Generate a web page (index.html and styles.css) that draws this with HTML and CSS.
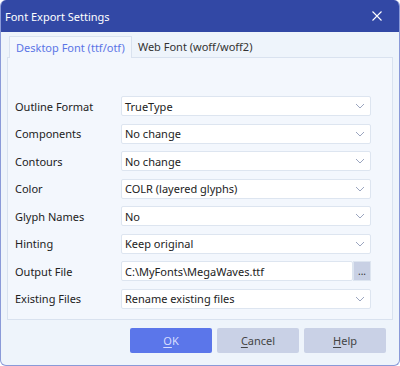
FILE: index.html
```html
<!DOCTYPE html>
<html lang="en">
<head>
    <meta charset="UTF-8">
    <title>Font Export Settings</title>
    <link rel="stylesheet" href="styles.css">
</head>
<body>
    <div class="window">
        <div class="titlebar">
            <span class="title">Font Export Settings</span>
            <svg class="close" width="10" height="10" viewBox="0 0 10 10">
                <path d="M0.5 0.5L9.5 9.5M9.5 0.5L0.5 9.5" stroke="#fff" stroke-width="1.1" fill="none"/>
            </svg>
        </div>
        <div class="content">
            <div class="tabs">
                <div class="tab active">Desktop Font (ttf/otf)</div>
                <div class="tab">Web Font (woff/woff2)</div>
            </div>
            <div class="panel">
                <div class="row">
                    <label>Outline Format</label>
                    <div class="select">TrueType<svg class="chev" width="10" height="6" viewBox="0 0 10 6"><path d="M1 1L5 5L9 1" stroke="#9ba5bf" stroke-width="1" fill="none"/></svg></div>
                </div>
                <div class="row">
                    <label>Components</label>
                    <div class="select">No change<svg class="chev" width="10" height="6" viewBox="0 0 10 6"><path d="M1 1L5 5L9 1" stroke="#9ba5bf" stroke-width="1" fill="none"/></svg></div>
                </div>
                <div class="row">
                    <label>Contours</label>
                    <div class="select">No change<svg class="chev" width="10" height="6" viewBox="0 0 10 6"><path d="M1 1L5 5L9 1" stroke="#9ba5bf" stroke-width="1" fill="none"/></svg></div>
                </div>
                <div class="row">
                    <label>Color</label>
                    <div class="select">COLR (layered glyphs)<svg class="chev" width="10" height="6" viewBox="0 0 10 6"><path d="M1 1L5 5L9 1" stroke="#9ba5bf" stroke-width="1" fill="none"/></svg></div>
                </div>
                <div class="row">
                    <label>Glyph Names</label>
                    <div class="select">No<svg class="chev" width="10" height="6" viewBox="0 0 10 6"><path d="M1 1L5 5L9 1" stroke="#9ba5bf" stroke-width="1" fill="none"/></svg></div>
                </div>
                <div class="row">
                    <label>Hinting</label>
                    <div class="select">Keep original<svg class="chev" width="10" height="6" viewBox="0 0 10 6"><path d="M1 1L5 5L9 1" stroke="#9ba5bf" stroke-width="1" fill="none"/></svg></div>
                </div>
                <div class="row">
                    <label>Output File</label>
                    <div class="file">
                        <div class="file-input">C:\MyFonts\MegaWaves.ttf</div>
                        <div class="browse">...</div>
                    </div>
                </div>
                <div class="row">
                    <label>Existing Files</label>
                    <div class="select">Rename existing files<svg class="chev" width="10" height="6" viewBox="0 0 10 6"><path d="M1 1L5 5L9 1" stroke="#9ba5bf" stroke-width="1" fill="none"/></svg></div>
                </div>
            </div>
            <div class="buttons">
                <button class="btn primary"><u>O</u>K</button>
                <button class="btn"><u>C</u>ancel</button>
                <button class="btn"><u>H</u>elp</button>
            </div>
        </div>
    </div>
</body>
</html>
```

FILE: styles.css
```css
body {
    margin: 0;
    font-family: 'Noto Sans', 'Open Sans', sans-serif;
    font-size: 11px;
    color: #222;
    background: #fff;
}
.window {
    width: 400px;
    height: 366px;
    box-sizing: border-box;
    border: 1px solid #8a9ad8;
    border-top: none;
    border-radius: 6px;
    overflow: hidden;
    background: #eef4fb;
    display: flex;
    flex-direction: column;
}
.titlebar {
    height: 32px;
    flex: none;
    background: #3248a5;
    color: white;
    display: flex;
    align-items: center;
    justify-content: space-between;
    padding: 0 17px 0 4px;
}
.title {
    font-size: 11px;
}
.close {
    display: block;
}
.content {
    padding: 4px 6px 0 6px;
    display: flex;
    flex-direction: column;
}
.tabs {
    display: flex;
    height: 22px;
    padding-left: 2px;
    margin-bottom: -1px;
}
.tab {
    padding: 0 6px;
    line-height: 21px;
    color: #333;
}
.tab.active {
    color: #5b75e6;
    background: #f3f7fd;
    border: 1px solid #d9e2ef;
    border-bottom: none;
    position: relative;
    z-index: 1;
}
.panel {
    background: #f3f7fd;
    border: 1px solid #d9e2ef;
    height: 263px;
    box-sizing: border-box;
    padding: 38px 21px 0 7px;
    display: flex;
    flex-direction: column;
    gap: 7.5px;
}
.row {
    display: flex;
    align-items: center;
    height: 20px;
}
.row label {
    width: 106px;
    flex: none;
}
.select, .file-input {
    flex: 1;
    height: 20px;
    box-sizing: border-box;
    background: white;
    border: 1px solid #dde5f0;
    border-radius: 2px;
    display: flex;
    align-items: center;
    justify-content: space-between;
    padding: 0 5px 0 3px;
}
.chev {
    display: block;
}
.file {
    flex: 1;
    display: flex;
    height: 20px;
}
.browse {
    width: 18px;
    height: 20px;
    box-sizing: border-box;
    background: #c8d0e4;
    border: 1px solid #dde5f0;
    font-size: 10px;
    line-height: 18px;
    text-align: center;
    color: #333;
}
.buttons {
    display: flex;
    justify-content: flex-end;
    gap: 5px;
    margin-top: 8px;
    padding-right: 7px;
}
.btn {
    width: 82px;
    height: 25px;
    border: none;
    border-radius: 2px;
    background: #c9d1e6;
    color: #444;
    font-family: 'Noto Sans', 'Open Sans', sans-serif;
    font-size: 11px;
}
.btn.primary {
    background: #5b76ea;
    color: #d7ddff;
}
.btn u {
    text-underline-offset: 2px;
}
```
